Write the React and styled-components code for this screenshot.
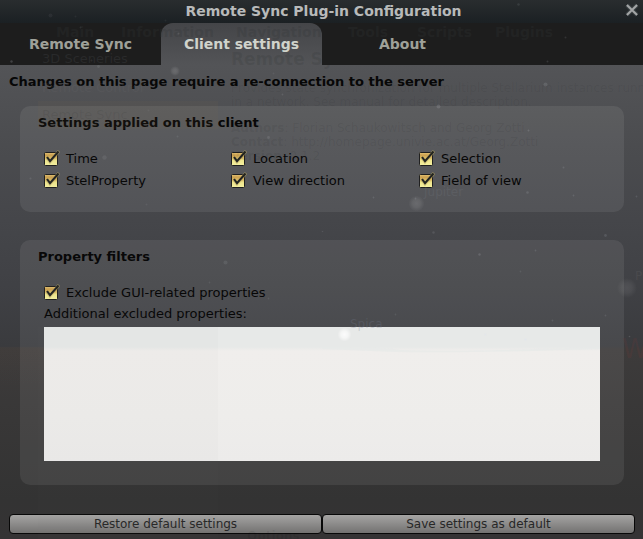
import React from "react";
import styled, { createGlobalStyle } from "styled-components";

const GlobalStyle = createGlobalStyle`
  * { box-sizing: border-box; }
  body { margin: 0; overflow: hidden; background: #353535; }
`;

const Window = styled.div`
  position: relative;
  display: flex;
  flex-direction: column;
  width: 643px;
  height: 539px;
  overflow: hidden;
  font-family: "DejaVu Sans", sans-serif;
  font-size: 13px;
  color: #070707;
  background: linear-gradient(#535457 65px, #4b4c4f 145px, #45464a 220px, #404145 285px, #3a3b3e 346px, #3d3b3b 349px, #383737 420px, #333333 500px, #353334 539px);
`;

const TitleBar = styled.header`
  display: flex;
  align-items: center;
  height: 23px;
  padding: 0 4px 2px 23px;
  background: linear-gradient(#292d2f, #1b2023);
`;

const Title = styled.h1`
  flex: 1;
  margin: 0;
  padding-top: 1px;
  text-align: center;
  font-size: 14px;
  line-height: 20px;
  font-weight: bold;
  color: #b8baba;
`;

const CloseButton = styled.button`
  display: flex;
  width: 15px;
  height: 15px;
  padding: 0;
  border: 0;
  background: none;
`;

const TabBar = styled.nav`
  display: grid;
  grid-template-columns: 161px 161px 161px;
  height: 42px;
  background: #1d1d1d;
`;

const Tab = styled.button`
  padding: 0;
  border: 0;
  border-radius: ${(p) => (p.$active ? "12px 12px 0 0" : "0")};
  background: ${(p) => (p.$active ? "linear-gradient(#444548, #535457)" : "none")};
  color: ${(p) => (p.$active ? "#d0d3cb" : "#9fa199")};
  font: bold 14px/42px "DejaVu Sans", sans-serif;
`;

const Page = styled.main`
  display: flex;
  flex-direction: column;
  flex: 1;
  padding: 9px 8px 5px 9px;
`;

const Notice = styled.p`
  margin: 0;
  height: 32px;
  line-height: 16px;
  font-weight: bold;
`;

const Group = styled.section`
  display: flex;
  flex-direction: column;
  height: ${(p) => p.$height}px;
  margin: 0 11px ${(p) => p.$gap}px 11px;
  padding: 9px 24px 0;
  border-radius: 10px;
  background: rgba(255, 255, 255, 0.075);
`;

const GroupTitle = styled.h2`
  margin: 0 0 0 -6px;
  height: 33px;
  font-size: 13px;
  line-height: 16px;
  font-weight: bold;
`;

const OptionGrid = styled.div`
  display: grid;
  grid-template-columns: 187px 188px 1fr;
  grid-auto-rows: 22px;
`;

const Option = styled.label`
  display: flex;
  align-items: center;
  gap: 6px;
  height: 22px;
  line-height: 22px;
  white-space: nowrap;

  svg {
    margin-bottom: 2px;
  }
`;

const FieldLabel = styled.label`
  height: 23px;
  line-height: 20px;
`;

const TextBox = styled.textarea`
  display: block;
  width: 556px;
  height: 134px;
  padding: 4px;
  border: 0;
  border-radius: 0;
  resize: none;
  outline: none;
  background: linear-gradient(#e7e9e8 20px, #f0eeec 24px, #eeedeb 90px, #ecebea);
`;

const Footer = styled.footer`
  display: grid;
  grid-template-columns: 1fr 1fr;
`;

const PushButton = styled.button`
  height: 20px;
  padding: 0;
  border: 1px solid #080808;
  border-radius: 4px;
  background: linear-gradient(#a5a4a3, #737271);
  color: #272727;
  font: 12px/17px "DejaVu Sans", sans-serif;
`;

const Scenery = styled.div`
  position: absolute;
  inset: 0;
  pointer-events: none;
`;

const Sky = styled.svg`
  position: absolute;
  inset: 0;
`;

const Shade = styled.div`
  position: absolute;
  left: ${(p) => p.$x}px;
  top: ${(p) => p.$y}px;
  width: ${(p) => p.$w}px;
  height: ${(p) => p.$h}px;
  background: ${(p) => p.$tone};
`;

const Faint = styled.span`
  position: absolute;
  left: ${(p) => p.$x}px;
  top: ${(p) => p.$y}px;
  white-space: pre;
  line-height: 16px;
  font-size: ${(p) => p.$size || 12}px;
  font-weight: ${(p) => (p.$bold ? "bold" : "normal")};
  color: ${(p) => p.$tone || "rgba(20,22,24,.08)"};
`;

function CheckMark() {
  return (
    <svg width="16" height="16" viewBox="0 0 16 16">
      <defs>
        <linearGradient id="gold" x1="0" y1="0" x2="0" y2="1">
          <stop offset="0" stopColor="#e6c878" />
          <stop offset=".2" stopColor="#cb9f4f" />
          <stop offset=".45" stopColor="#dcc068" />
          <stop offset=".6" stopColor="#eee58c" />
          <stop offset="1" stopColor="#f5f1a1" />
        </linearGradient>
      </defs>
      <rect x=".5" y="2.5" width="13" height="13" rx="1" fill="url(#gold)" stroke="#202020" />
      <path d="M3 7.5L6 11.5L15 1" fill="none" stroke="#b5a362" strokeOpacity=".55" strokeWidth="3.4" />
      <path d="M3 7L6 11.2L14.5 1.5" fill="none" stroke="#222421" strokeWidth="2" />
    </svg>
  );
}

const Check = ({ children }) => (
  <Option>
    <CheckMark />
    {children}
  </Option>
);

const tabLabels = [
  ["Main", 56], ["Information", 121], ["Navigation", 236],
  ["Tools", 348], ["Scripts", 417], ["Plugins", 495],
];

const stars = [
  [50, 15, 2, 0.1], [75, 16, 1, 0.1], [80, 27, 1, 0.14], [11, 61, 1.2, 0.3],
  [91, 60, 1, 0.14], [98, 66, 1.4, 0.16], [178, 33, 1, 0.18], [165, 20, 1, 0.1],
  [518, 4, 1.3, 0.16], [565, 37, 1, 0.18], [547, 61, 1, 0.2], [545, 84, 2, 0.2],
  [438, 106, 2, 0.23], [273, 73, 1, 0.12], [282, 94, 0.9, 0.18], [148, 110, 1, 0.1],
  [528, 130, 1, 0.25], [268, 137, 1.4, 0.18], [104, 157, 2.2, 0.13], [30, 178, 1, 0.18],
  [177, 136, 1, 0.16], [146, 204, 0.9, 0.12], [373, 197, 0.9, 0.2], [415, 198, 0.9, 0.2],
  [527, 192, 1.3, 0.2], [563, 167, 1, 0.2], [573, 195, 0.9, 0.2], [636, 196, 0.9, 0.2],
  [322, 231, 0.8, 0.18], [433, 232, 1.2, 0.18], [605, 235, 1.4, 0.2],
  [479, 254, 1.2, 0.25], [535, 250, 0.9, 0.2], [225, 262, 2, 0.16], [209, 282, 0.9, 0.15],
  [268, 298, 0.9, 0.15], [395, 314, 0.9, 0.16], [520, 271, 0.9, 0.16], [552, 320, 0.9, 0.18],
  [605, 315, 0.9, 0.18], [629, 336, 0.8, 0.15], [485, 334, 0.9, 0.65], [525, 339, 1, 0.9],
];

function Background() {
  return (
    <Scenery aria-hidden="true">
      <Shade $x={38} $y={65} $w={180} $h={262} $tone="rgba(110,108,105,.02)" />
      <Shade $x={38} $y={327} $w={180} $h={212} $tone="rgba(110,110,110,.022)" />
      <Shade $x={38} $y={101} $w={180} $h={28} $tone="rgba(140,112,65,.07)" />
      <Shade $x={0} $y={347} $w={44} $h={40} $tone="linear-gradient(rgba(150,110,75,.045), rgba(150,110,75,0))" />
      {tabLabels.map(([text, x]) => (
        <Faint key={text} $x={x} $y={24} $size={14} $bold $tone="rgba(50,53,55,.27)">{text}</Faint>
      ))}
      <Faint $x={42} $y={51} $size={13} $tone="rgba(80,83,85,.25)">3D Sceneries</Faint>
      <Faint $x={42} $y={80} $size={13} $tone="rgba(120,120,120,.14)">Remote Control</Faint>
      <Faint $x={42} $y={107} $size={13} $tone="rgba(30,30,30,.1)">Remote Sync</Faint>
      <Faint $x={231} $y={51} $size={17} $bold $tone="rgba(30,35,35,.12)">Remote Sync</Faint>
      <Faint $x={231} $y={80}>Provides state synchronization for multiple Stellarium instances running</Faint>
      <Faint $x={231} $y={94}>in a network. See manual for detailed description.</Faint>
      <Faint $x={231} $y={120}><b>Authors</b>: Florian Schaukowitsch and Georg Zotti</Faint>
      <Faint $x={231} $y={134}><b>Contact</b>: http://homepage.univie.ac.at/Georg.Zotti</Faint>
      <Faint $x={231} $y={148}><b>Version</b>: 0.1.2</Faint>
      <Faint $x={424} $y={184} $tone="rgba(125,130,140,.2)">Jupiter</Faint>
      <Faint $x={350} $y={316} $tone="rgba(120,124,145,.25)">Spica</Faint>
      <Faint $x={635} $y={268} $tone="rgba(120,120,120,.18)">P</Faint>
      <Faint $x={622} $y={341} $size={26} $tone="rgba(115,57,53,.2)">W</Faint>
      <Faint $x={247} $y={528} $bold $tone="rgba(0,0,0,.07)">Options</Faint>
      <Sky width="643" height="539" viewBox="0 0 643 539">
        <defs>
          <radialGradient id="glow">
            <stop offset="0" stopColor="#ffffff" stopOpacity="1" />
            <stop offset=".5" stopColor="#ffffff" stopOpacity=".7" />
            <stop offset="1" stopColor="#ffffff" stopOpacity="0" />
          </radialGradient>
        </defs>
        <path d="M322 347C350 347 385 347 400 350C450 352 500 350 600 347V349C540 351 460 353 395 352L322 349Z" fill="#e7e9e8" opacity=".7" />
        {stars.map(([x, y, r, o]) => (
          <circle key={`${x}-${y}`} cx={x + 0.5} cy={y + 0.5} r={r} fill="#e1e5ec" opacity={o * (y > 325 ? 1 : 0.6)} />
        ))}
        <circle cx="175" cy="71" r="5" fill="url(#glow)" opacity=".14" />
        <circle cx="416.5" cy="203.5" r="8" fill="url(#glow)" opacity=".13" />
        <circle cx="627" cy="288" r="10" fill="url(#glow)" opacity=".09" />
        <circle cx="344.5" cy="334.5" r="7" fill="url(#glow)" opacity=".85" />
      </Sky>
    </Scenery>
  );
}

export default function App() {
  return (
    <>
      <GlobalStyle />
      <Window>
        <TitleBar>
          <Title>Remote Sync Plug-in Configuration</Title>
          <CloseButton aria-label="Close">
            <svg width="15" height="15" viewBox="0 0 15 15">
              <path d="M2.9 2L13.1 12M13.1 2L2.9 12" stroke="#778085" strokeOpacity=".3" strokeWidth="4" />
              <path d="M2.9 2L13.1 12M13.1 2L2.9 12" stroke="#a4a6a7" strokeWidth="2" />
            </svg>
          </CloseButton>
        </TitleBar>
        <TabBar>
          <Tab>Remote Sync</Tab>
          <Tab $active>Client settings</Tab>
          <Tab>About</Tab>
        </TabBar>
        <Page>
          <Notice>Changes on this page require a re-connection to the server</Notice>
          <Group $height={106} $gap={28}>
            <GroupTitle>Settings applied on this client</GroupTitle>
            <OptionGrid>
              <Check>Time</Check>
              <Check>Location</Check>
              <Check>Selection</Check>
              <Check>StelProperty</Check>
              <Check>View direction</Check>
              <Check>Field of view</Check>
            </OptionGrid>
          </Group>
          <Group $height={245} $gap={29}>
            <GroupTitle>Property filters</GroupTitle>
            <Check>Exclude GUI-related properties</Check>
            <FieldLabel htmlFor="excluded">Additional excluded properties:</FieldLabel>
            <TextBox id="excluded" />
          </Group>
          <Footer>
            <PushButton>Restore default settings</PushButton>
            <PushButton>Save settings as default</PushButton>
          </Footer>
        </Page>
        <Background />
      </Window>
    </>
  );
}
